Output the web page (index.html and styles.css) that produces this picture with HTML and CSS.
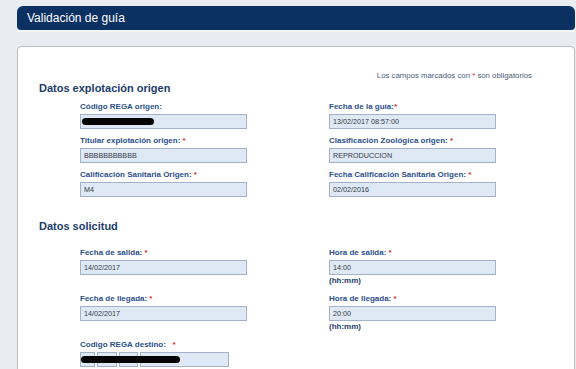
FILE: index.html
```html
<!DOCTYPE html>
<html lang="es">
<head>
  <meta charset="UTF-8" />
  <title>Validación de guía</title>
  <link rel="stylesheet" href="styles.css">
</head>
<body>
  <div class="page">
    <!-- Title bar -->
    <div class="title-bar">Validación de guía</div>
    <div class="title-gap"></div>

    <div class="panel">
      <p class="note">Los campos marcados con <span class="req">*</span> son obligatorios</p>

      <h3 class="section-title">Datos explotación origen</h3>
      <div class="form-grid">
        <div class="field">
          <label>Código REGA origen:</label>
          <div class="input"><span class="redact redact-short"></span></div>
        </div>
        <div class="field">
          <label>Fecha de la guía:<span class="req">*</span></label>
          <div class="input">13/02/2017 08:57:00</div>
        </div>
        <div class="field">
          <label>Titular explotación origen: <span class="req">*</span></label>
          <div class="input">BBBBBBBBBBB</div>
        </div>
        <div class="field">
          <label>Clasificación Zoológica origen: <span class="req">*</span></label>
          <div class="input">REPRODUCCION</div>
        </div>
        <div class="field">
          <label>Calificación Sanitaria Origen: <span class="req">*</span></label>
          <div class="input">M4</div>
        </div>
        <div class="field">
          <label>Fecha Calificación Sanitaria Origen: <span class="req">*</span></label>
          <div class="input">02/02/2016</div>
        </div>
      </div>

      <h3 class="section-title second">Datos solicitud</h3>
      <div class="form-grid loose">
        <div class="field">
          <label>Fecha de salida: <span class="req">*</span></label>
          <div class="input">14/02/2017</div>
        </div>
        <div class="field">
          <label>Hora de salida: <span class="req">*</span></label>
          <div class="input">14:00</div>
          <div class="hint">(hh:mm)</div>
        </div>
        <div class="field">
          <label>Fecha de llegada: <span class="req">*</span></label>
          <div class="input">14/02/2017</div>
        </div>
        <div class="field">
          <label>Hora de llegada: <span class="req">*</span></label>
          <div class="input">20:00</div>
          <div class="hint">(hh:mm)</div>
        </div>
        <div class="field">
          <label>Codigo REGA destino: &nbsp; <span class="req">*</span></label>
          <div class="rega-row">
            <div class="input box-a"></div>
            <div class="input box-b"></div>
            <div class="input box-c"></div>
            <div class="input box-d"></div>
            <span class="redact redact-long"></span>
          </div>
        </div>
      </div>
    </div>
  </div>
</body>
</html>
```

FILE: styles.css
```css
body {
  margin: 0;
  height: 100vh;
  font-family: 'Liberation Sans', Arial, sans-serif;
  background-color: #e9ecf0;
  overflow: hidden;
}

.page {
  padding: 6px 1px 0 17px;
}

.title-bar {
  height: 24px;
  line-height: 24px;
  padding-left: 10px;
  background-color: #0b3062;
  color: #ffffff;
  font-size: 12px;
  border-radius: 6px 6px 4px 4px;
}

.title-gap {
  height: 14px;
  border-top: 2px solid #f3f5f8;
}

.panel {
  background: #ffffff;
  border: 1px solid #b9bcc0;
  border-radius: 4px;
  height: 330px;
  padding: 0 0 0 21px;
}

.note {
  margin: 24px 42px 0 0;
  text-align: right;
  font-size: 7.8px;
  line-height: 9px;
  color: #4a5d7a;
}

.req {
  color: #d0302c;
}

.section-title {
  margin: 1px 0 0;
  font-size: 11px;
  line-height: 14px;
  color: #1d3c6b;
}

.section-title.second {
  margin-top: 22px;
}

.form-grid {
  display: grid;
  grid-template-columns: 167px 167px;
  column-gap: 82px;
  row-gap: 7px;
  margin: 7px 0 0 41px;
}

.form-grid.loose {
  margin-top: 15px;
  row-gap: 8px;
}

.field label {
  display: block;
  font-size: 8px;
  font-weight: bold;
  line-height: 10px;
  color: #2b5089;
  margin-bottom: 2px;
  white-space: nowrap;
}

.input {
  position: relative;
  box-sizing: border-box;
  height: 15px;
  line-height: 13px;
  padding-left: 3px;
  background-color: #dfe9f5;
  border: 1px solid #a3b2c6;
  font-size: 7.2px;
  color: #333a45;
}

.hint {
  font-size: 8px;
  font-weight: bold;
  line-height: 10px;
  color: #1d3c6b;
  margin-top: 1px;
}

.redact {
  position: absolute;
  display: block;
  height: 7px;
  border-radius: 4px;
  background-color: #050505;
}

.redact-short {
  left: 1px;
  top: 3px;
  width: 72px;
}

.rega-row {
  position: relative;
  display: flex;
  gap: 2px;
}

.box-a { width: 15px; }
.box-b { width: 20px; }
.box-c { width: 19px; }
.box-d { width: 89px; }

.redact-long {
  left: 1px;
  top: 4px;
  width: 99px;
}
```
